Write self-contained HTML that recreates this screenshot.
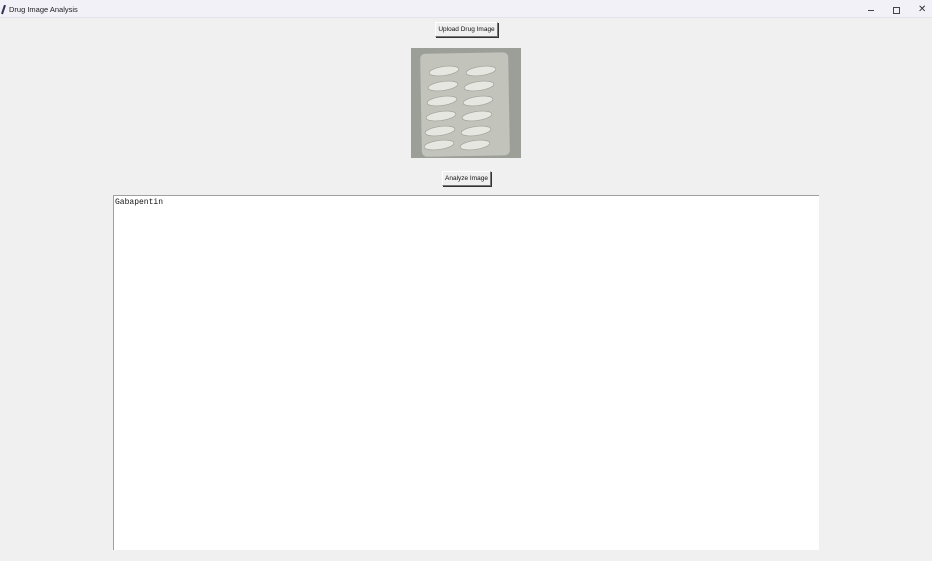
<!DOCTYPE html>
<html><head><style>
body{margin:0;width:932px;height:561px;background:#f0f0f0;position:relative;overflow:hidden;font-family:"Liberation Sans",sans-serif}
.tb{position:absolute;left:0;top:0;width:932px;height:17px;background:#f3f1f8;border-bottom:1px solid #e4e2ea}
.tt{position:absolute;left:9px;top:5px;font-size:7.5px;color:#222}
.btn{position:absolute;background:#f0f0f0;border:1px solid #777;border-top-color:#fff;border-left-color:#fff;box-shadow:1px 1px 0 #333;font-size:6.5px;color:#111;text-align:center;line-height:13px;white-space:nowrap}
.ta{position:absolute;left:113px;top:195px;width:705px;height:354px;background:#fff;border-top:1px solid #a0a0a0;border-left:1px solid #a0a0a0}
.ta span{position:absolute;left:1px;top:2px;font-family:"Liberation Mono",monospace;font-size:8px;color:#111}
</style></head><body>
<div class="tb">
<svg style="position:absolute;left:1px;top:5px" width="6" height="10"><path d="M4 0 L1 9" stroke="#335" stroke-width="2"/></svg>
<div class="tt">Drug Image Analysis</div>
<div style="position:absolute;left:868px;top:10px;width:6px;height:1px;background:#444"></div>
<div style="position:absolute;left:893px;top:7px;width:5px;height:5px;border:1px solid #444"></div>
<div style="position:absolute;left:918px;top:4px;font-size:10px;color:#333">✕</div>
</div>
<div class="btn" style="left:435px;top:22px;width:61px;height:13px">Upload Drug Image</div>
<svg style="position:absolute;left:411px;top:48px" width="110" height="110">
<rect width="110" height="110" fill="#9c9e98"/>
<rect x="10" y="5" width="88" height="103" rx="5" fill="#c2c4bc" transform="rotate(-1 55 55)"/>
<g fill="#e6e7e0" stroke="#9fa199" stroke-width="0.7">
<ellipse cx="33" cy="23" rx="15" ry="4.5" transform="rotate(-8 33 23)"/>
<ellipse cx="70" cy="23" rx="15" ry="4.5" transform="rotate(-8 70 23)"/>
<ellipse cx="32" cy="38" rx="15" ry="4.5" transform="rotate(-8 32 38)"/>
<ellipse cx="68" cy="38" rx="15" ry="4.5" transform="rotate(-8 68 38)"/>
<ellipse cx="31" cy="53" rx="15" ry="4.5" transform="rotate(-8 31 53)"/>
<ellipse cx="67" cy="53" rx="15" ry="4.5" transform="rotate(-8 67 53)"/>
<ellipse cx="30" cy="68" rx="15" ry="4.5" transform="rotate(-8 30 68)"/>
<ellipse cx="66" cy="68" rx="15" ry="4.5" transform="rotate(-8 66 68)"/>
<ellipse cx="29" cy="83" rx="15" ry="4.5" transform="rotate(-8 29 83)"/>
<ellipse cx="65" cy="83" rx="15" ry="4.5" transform="rotate(-8 65 83)"/>
<ellipse cx="28" cy="97" rx="15" ry="4.5" transform="rotate(-8 28 97)"/>
<ellipse cx="64" cy="97" rx="15" ry="4.5" transform="rotate(-8 64 97)"/>
</g>
</svg>
<div class="btn" style="left:442px;top:171px;width:47px;height:13px">Analyze Image</div>
<div class="ta"><span>Gabapentin</span></div>
</body></html>
